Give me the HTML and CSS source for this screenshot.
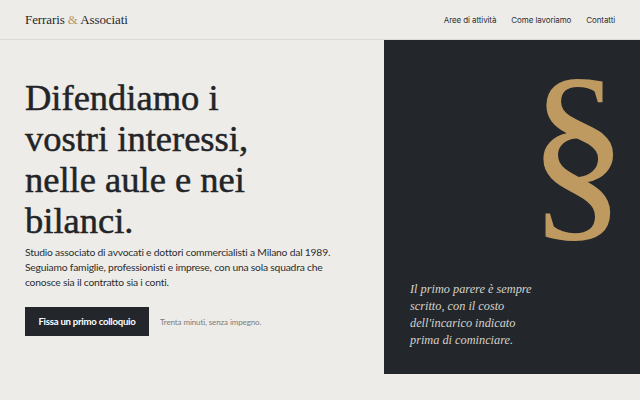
FILE: index.html
```html
<!DOCTYPE html>
<html lang="it">
<head>
<meta charset="utf-8">
<title>Ferraris &amp; Associati</title>
<link rel="stylesheet" href="styles.css">
</head>
<body>
<header class="site-header">
  <div class="logo">Ferraris <span class="amp">&amp;</span> Associati</div>
  <nav class="nav">
    <a href="#">Aree di attività</a>
    <a href="#">Come lavoriamo</a>
    <a href="#">Contatti</a>
  </nav>
</header>
<main class="hero">
  <section class="hero-text">
    <h1 class="title">Difendiamo i<br>vostri interessi,<br>nelle aule e nei<br>bilanci.</h1>
    <p class="lead">Studio associato di avvocati e dottori commercialisti a Milano dal 1989. Seguiamo famiglie, professionisti e imprese, con una sola squadra che conosce sia il contratto sia i conti.</p>
    <div class="cta">
      <a class="btn" href="#">Fissa un primo colloquio</a>
      <span class="note">Trenta minuti, senza impegno.</span>
    </div>
  </section>
  <aside class="panel">
    <div class="mark">§</div>
    <p class="quote">Il primo parere è sempre<br>scritto, con il costo<br>dell'incarico indicato<br>prima di cominciare.</p>
  </aside>
</main>
</body>
</html>
```
FILE: styles.css
```css
html, body {
  margin: 0;
  padding: 0;
}
body {
  background: #eeece8;
  color: #222427;
  font-family: "Lato", "Liberation Sans", sans-serif;
  width: 640px;
  height: 400px;
  overflow: hidden;
}
.site-header {
  height: 39px;
  border-bottom: 1px solid #dcd9d4;
  display: flex;
  align-items: center;
  justify-content: space-between;
  padding: 0 25px;
}
.logo {
  font-family: "Liberation Serif", serif;
  font-size: 13px;
  color: #26282b;
  letter-spacing: -0.1px;
}
.amp {
  color: #b9975f;
}
.nav {
  display: flex;
  gap: 15px;
}
.nav a {
  font-family: "Inter", "Liberation Sans", sans-serif;
  font-size: 8px;
  color: #2d2f33;
  text-decoration: none;
  letter-spacing: -0.1px;
}
.hero {
  display: grid;
  grid-template-columns: 1fr 256px;
  height: 334px;
}
.hero-text {
  padding: 37px 0 0 25px;
}
.title {
  margin: 0;
  font-family: "Liberation Serif", serif;
  font-weight: 400;
  font-size: 36.5px;
  line-height: 41px;
  color: #222427;
  -webkit-text-stroke: 0.5px #222427;
}
.lead {
  margin: 4px 0 0;
  font-size: 10.3px;
  line-height: 15px;
  color: #2a2c30;
  letter-spacing: -0.2px;
  width: 330px;
}
.cta {
  margin-top: 17px;
  display: flex;
  align-items: center;
  gap: 11px;
}
.btn {
  background: #23272b;
  color: #ffffff;
  text-decoration: none;
  font-weight: 700;
  font-size: 9.6px;
  letter-spacing: -0.25px;
  width: 124px;
  height: 29px;
  display: flex;
  align-items: center;
  justify-content: center;
}
.note {
  font-size: 8px;
  letter-spacing: -0.1px;
  color: #7b7c7e;
}
.panel {
  background: #23272b;
  display: flex;
  flex-direction: column;
  justify-content: space-between;
  padding: 0 0 25px 26px;
}
.mark {
  align-self: flex-end;
  font-family: "Liberation Serif", serif;
  font-size: 201px;
  line-height: 1;
  color: #bf9a60;
  margin: 8px 12px 0 0;
}
.quote {
  margin: 0;
  font-family: "Liberation Serif", serif;
  font-style: italic;
  font-size: 12.3px;
  line-height: 17px;
  color: #d5d2cb;
}
```
